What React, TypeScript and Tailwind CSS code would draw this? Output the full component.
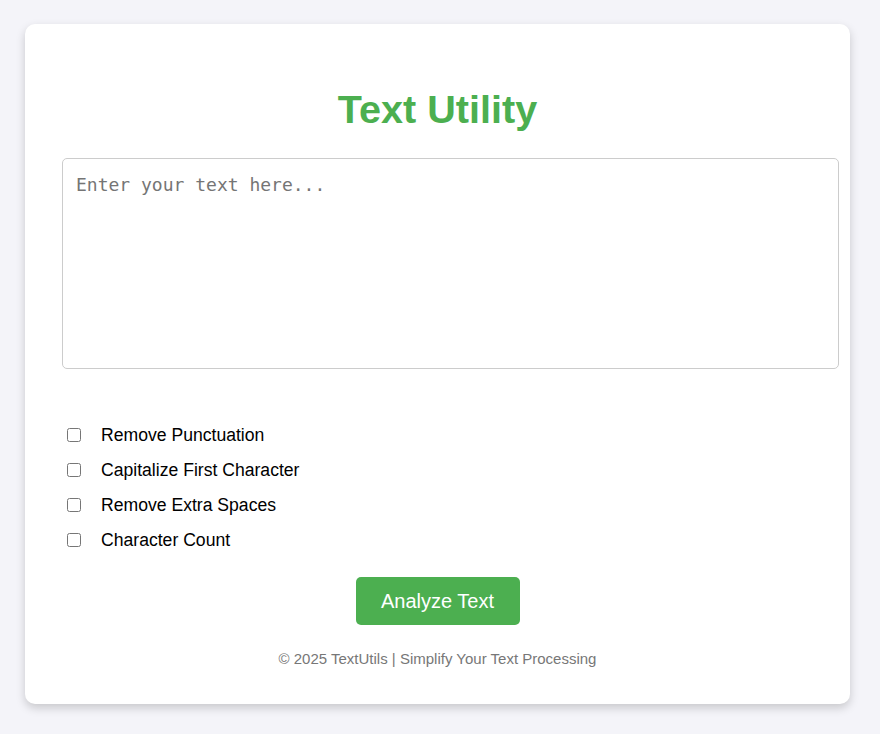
const options = [
  'Remove Punctuation',
  'Capitalize First Character',
  'Remove Extra Spaces',
  'Character Count',
];

export default function App() {
  return (
    <div className="min-h-[734px] bg-[#f4f4f9] pt-[24px] pl-[25px] font-['Liberation_Sans',Arial,sans-serif]">
      <div className="w-[825px] rounded-[10px] bg-white px-[37px] pt-[37px] pb-[37px] shadow-[0_4px_10px_rgba(0,0,0,0.18)]">
        <h1 className="mt-[26px] mb-[26px] text-center text-[39.6px] font-bold leading-[45px] text-[#4CAF50]">
          Text Utility
        </h1>

        <textarea
          placeholder="Enter your text here..."
          className="block h-[211px] w-[777px] resize-none rounded-[5px] border border-[#ccc] px-[13px] pt-[15px] font-['DejaVu_Sans_Mono',monospace] text-[18px] leading-[21px] outline-none placeholder:text-[#757575]"
        />

        {/* options */}
        <div className="mt-[48px] flex flex-col">
          {options.map((opt) => (
            <label key={opt} className="flex h-[35px] items-center">
              <input type="checkbox" className="m-0 ml-[5px] h-[14px] w-[14px]" />
              <span className="ml-[20px] text-[17.6px] leading-[20px] text-black">{opt}</span>
            </label>
          ))}
        </div>

        <div className="mt-[20px] flex justify-center">
          <button className="h-[48px] w-[164px] rounded-[5px] bg-[#4CAF50] text-[20px] text-white">
            Analyze Text
          </button>
        </div>

        <p className="mt-[25px] text-center text-[15px] leading-[17px] text-[#777]">
          © 2025 TextUtils | Simplify Your Text Processing
        </p>
      </div>
    </div>
  );
}
